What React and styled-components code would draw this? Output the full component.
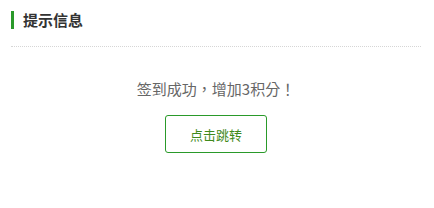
import React from "react";
import styled, { createGlobalStyle } from "styled-components";

const GlobalStyle = createGlobalStyle`
  body {
    margin: 0;
    background: #fff;
    font-family: "Noto Sans CJK SC", "Noto Sans", sans-serif;
  }
`;

const Page = styled.div`
  padding: 11px 13px 0 11px;
`;

const Header = styled.div`
  padding-bottom: 17px;
  border-bottom: 1px dotted #d6d6d6;
`;

const Title = styled.h3`
  margin: 0;
  height: 18px;
  line-height: 18px;
  border-left: 3px solid #2a9a2a;
  padding-left: 9px;
  font-size: 15px;
  font-weight: bold;
  color: #333;
`;

const Body = styled.div`
  display: flex;
  flex-direction: column;
  align-items: center;
  padding-top: 32px;
`;

const Message = styled.p`
  margin: 0;
  line-height: 20px;
  font-size: 15px;
  font-family: "Noto Sans CJK TC", "Noto Sans CJK SC", sans-serif;
  color: #666;
`;

const JumpButton = styled.a`
  margin-top: 16px;
  width: 102px;
  height: 38px;
  box-sizing: border-box;
  display: flex;
  align-items: center;
  justify-content: center;
  border: 1px solid #2a9a2a;
  border-radius: 3px;
  color: #3f8a1c;
  font-size: 13px;
  text-decoration: none;
  cursor: pointer;
`;

function App() {
  return (
    <Page>
      <GlobalStyle />
      <Header>
        <Title>提示信息</Title>
      </Header>
      <Body>
        <Message>签到成功，增加3积分！</Message>
        <JumpButton>点击跳转</JumpButton>
      </Body>
    </Page>
  );
}

export default App;
